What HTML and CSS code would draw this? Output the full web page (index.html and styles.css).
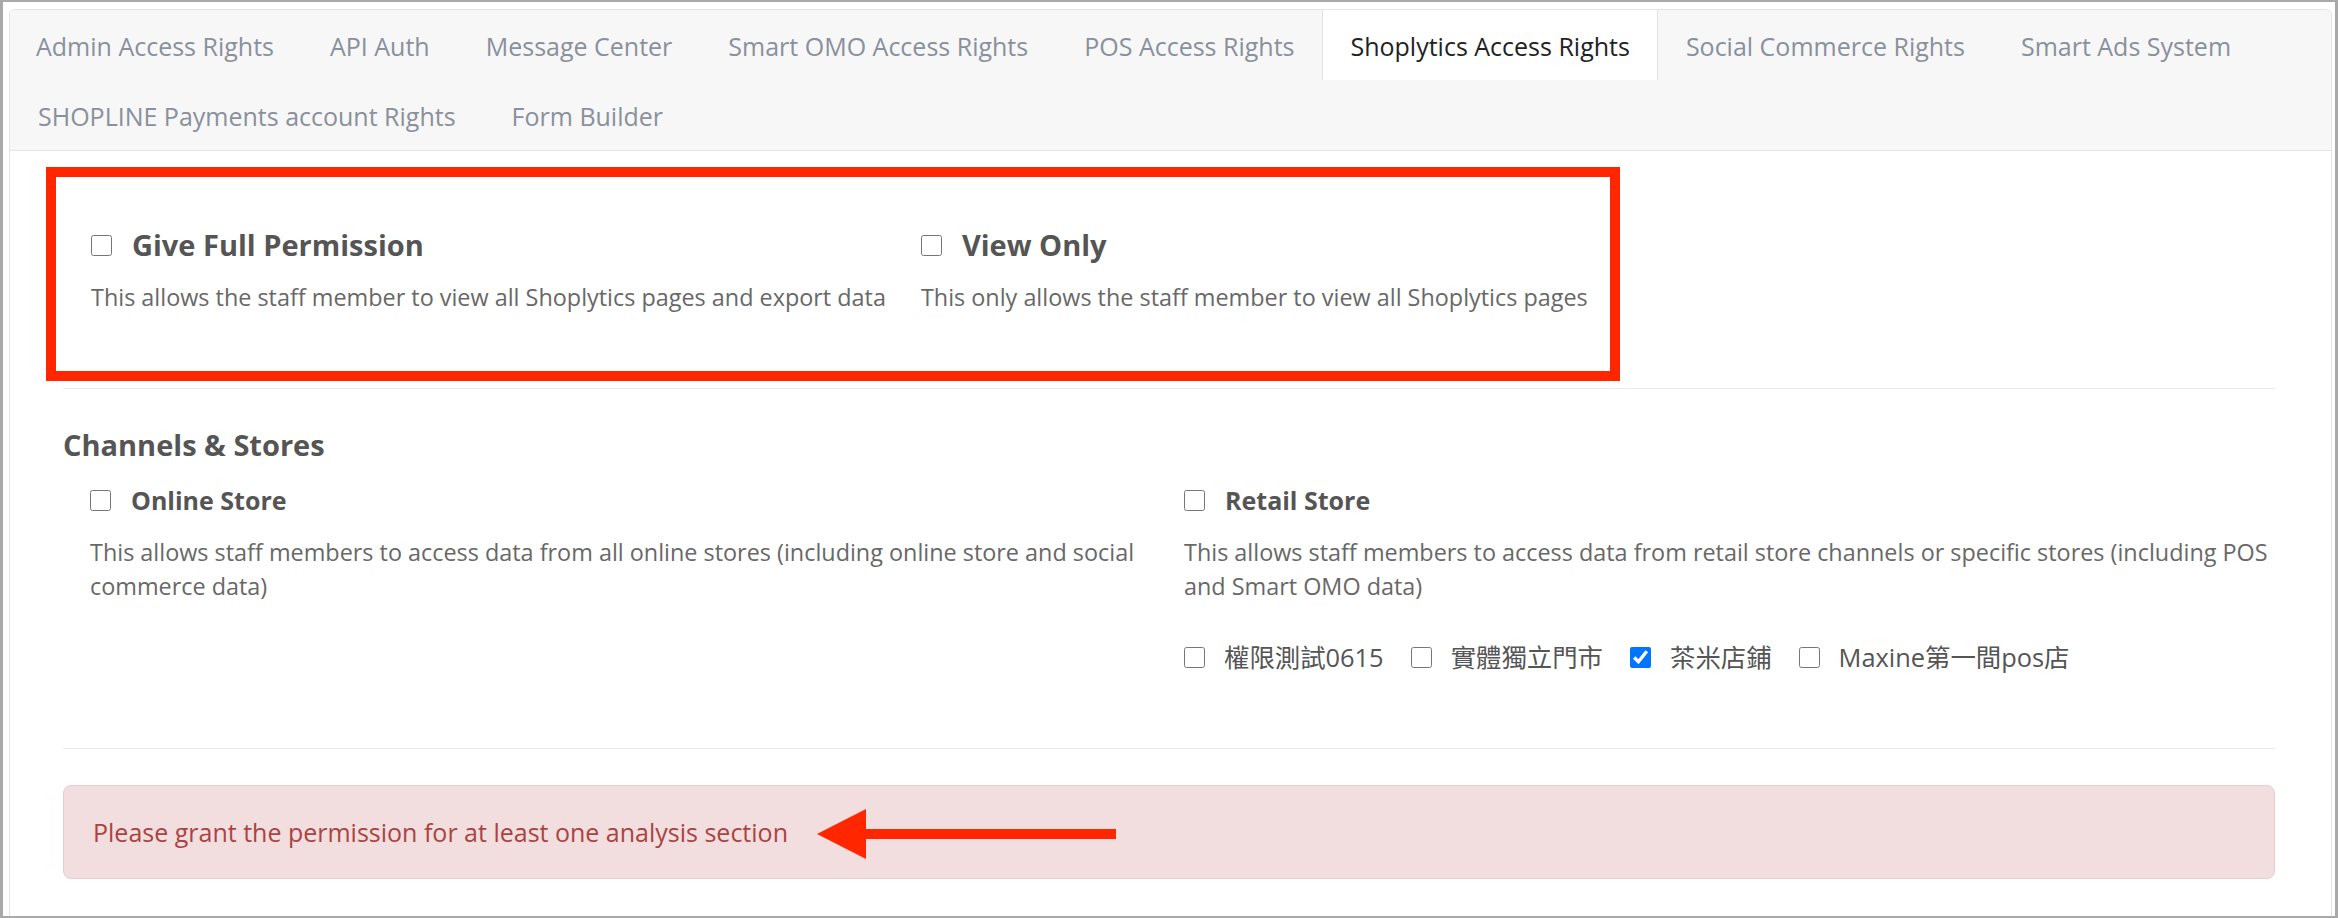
FILE: index.html
```html
<!DOCTYPE html>
<html>
	<head>
		<meta charset="UTF-8">
		<title>Shoplytics Access Rights</title>
		<link rel="stylesheet" href="styles.css">
	</head>

	<body>
		<div class="frame">
			<div class="panel">
				<ul class="tabs">
					<li>Admin Access Rights</li>
					<li>API Auth</li>
					<li>Message Center</li>
					<li>Smart OMO Access Rights</li>
					<li>POS Access Rights</li>
					<li class="active">Shoplytics Access Rights</li>
					<li>Social Commerce Rights</li>
					<li>Smart Ads System</li>
					<li>SHOPLINE Payments account Rights</li>
					<li>Form Builder</li>
				</ul>

				<div class="content">
					<div class="permissions">
						<div class="option">
							<label class="title big"><input type="checkbox"> Give Full Permission</label>
							<p class="desc">This allows the staff member to view all Shoplytics pages and export data</p>
						</div>
						<div class="option">
							<label class="title big"><input type="checkbox"> View Only</label>
							<p class="desc">This only allows the staff member to view all Shoplytics pages</p>
						</div>
						<div class="callout-box"></div>
					</div>

					<hr>

					<h3>Channels &amp; Stores</h3>
					<div class="channels">
						<div class="channel">
							<label class="title"><input type="checkbox"> Online Store</label>
							<p class="desc">This allows staff members to access data from all online stores (including online store and social commerce data)</p>
						</div>
						<div class="channel">
							<label class="title"><input type="checkbox"> Retail Store</label>
							<p class="desc">This allows staff members to access data from retail store channels or specific stores (including POS and Smart OMO data)</p>
							<div class="stores">
								<label><input type="checkbox"> 權限測試0615</label>
								<label><input type="checkbox"> 實體獨立門市</label>
								<label><input type="checkbox" checked> 茶米店鋪</label>
								<label><input type="checkbox"> Maxine第一間pos店</label>
							</div>
						</div>
					</div>

					<hr class="lower">

					<div class="alert">
						Please grant the permission for at least one analysis section
						<svg class="callout-arrow" width="300" height="50" viewBox="0 0 300 50">
							<polygon points="0,25 49,0 49,20 299,20 299,30 49,30 49,50" fill="#ff2600"/>
						</svg>
					</div>
				</div>
			</div>
		</div>
	</body>
</html>
```

FILE: styles.css
```css
html, body, ul, li, p, h3 {
	margin: 0;
	padding: 0;
}
body {
	font-family: "Open Sans", "Noto Sans CJK TC", sans-serif;
	background: #ffffff;
}
.frame {
	height: 918px;
	box-sizing: border-box;
	border: 3px solid #a9a9a9;
	border-top-width: 2px;
	border-bottom-width: 2px;
	padding: 7px 3px 0 6px;
	overflow: hidden;
}
.panel {
	height: 100%;
	box-sizing: border-box;
	border: 1px solid #e4e4e4;
	border-bottom: none;
	border-radius: 6px 6px 0 0;
	overflow: hidden;
}

.tabs {
	list-style: none;
	display: flex;
	flex-wrap: wrap;
	background: #f7f7f7;
	border-bottom: 1px solid #e6e6e6;
}
.tabs li {
	padding: 18px 27px;
	margin-bottom: -2px;
	line-height: 36px;
	font-size: 25px;
	color: #8a909c;
	border: 1px solid transparent;
	border-top: none;
	border-bottom: none;
}
.tabs li:first-child {
	margin-left: -2px;
}
.tabs li.active {
	background: #ffffff;
	color: #222222;
	border-left-color: #e2e2e2;
	border-right-color: #e2e2e2;
	margin-bottom: 0;
	padding-bottom: 16px;
}

.content {
	padding: 0 56px 0 53px;
}

input[type="checkbox"] {
	width: 21px;
	height: 21px;
	margin: 0;
	flex: none;
}
.title {
	display: flex;
	align-items: center;
	gap: 20px;
	font-weight: bold;
	font-size: 25px;
	line-height: 36px;
	color: #555555;
}
.title.big {
	font-size: 29px;
	line-height: 38px;
}
.desc {
	font-size: 23.4px;
	line-height: 34px;
	color: #686868;
}

.permissions {
	position: relative;
	display: flex;
	gap: 35px;
	padding: 75px 0 67px 28px;
}
.permissions .desc {
	margin-top: 16px;
}
.callout-box {
	position: absolute;
	left: -17px;
	top: 16px;
	width: 1574px;
	height: 214px;
	box-sizing: border-box;
	border: 10px solid #ff2600;
}

hr {
	margin: 7px 0 0 0;
	border: none;
	border-top: 1px solid #eaeaea;
}
hr.lower {
	margin-top: 74px;
}

h3 {
	margin-top: 37px;
	font-size: 29px;
	line-height: 38px;
	color: #555555;
}
.channels {
	display: grid;
	grid-template-columns: 1064px 1fr;
	column-gap: 30px;
	padding-left: 27px;
	margin-top: 18px;
}
.channel .desc {
	margin-top: 17px;
}
.stores {
	display: flex;
	align-items: center;
	gap: 27px;
	margin-top: 37px;
	font-size: 25.4px;
	line-height: 34px;
	color: #555555;
}
.stores label {
	display: flex;
	align-items: center;
	gap: 19px;
}

.alert {
	position: relative;
	margin-top: 36px;
	padding: 28px 29px;
	border: 1px solid #ebccd1;
	border-radius: 8px;
	background: #f2dede;
	color: #a94442;
	font-size: 25px;
	line-height: 36px;
}
.callout-arrow {
	position: absolute;
	left: 753px;
	top: 23px;
}
```
